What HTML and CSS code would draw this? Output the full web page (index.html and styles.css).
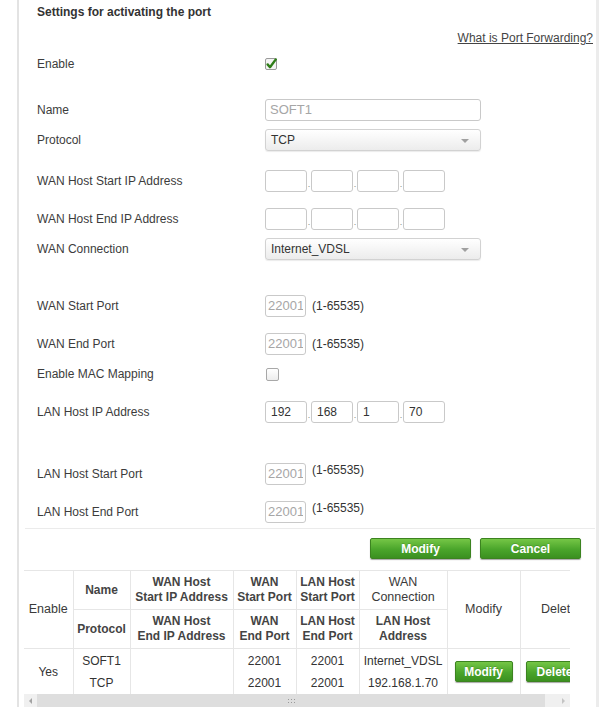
FILE: index.html
```html
<!DOCTYPE html>
<html lang="en">
<head>
<meta charset="utf-8">
<title>Port Forwarding</title>
<link rel="stylesheet" href="styles.css">
</head>
<body>
<div class="panel">
  <div class="title">Settings for activating the port</div>
  <div class="help"><a href="#" class="help-link">What is Port Forwarding?</a></div>

  <div class="row mt7">
    <span class="label">Enable</span>
    <span class="ctl">
      <svg class="cb" width="14" height="14" viewBox="0 0 14 14">
        <rect x="1.5" y="1.5" width="11" height="11" rx="1.5" fill="#f4f4f4" stroke="#9a9a9a"/>
        <path d="M3.6 7.4 L6 10.2 L11.8 2.4" fill="none" stroke="#2f7d18" stroke-width="2.4" stroke-linecap="round" stroke-linejoin="round"/>
      </svg>
    </span>
  </div>

  <div class="row mt24">
    <span class="label">Name</span>
    <span class="ctl"><input class="text wide" type="text" placeholder="SOFT1"></span>
  </div>

  <div class="row mt8">
    <span class="label">Protocol</span>
    <span class="ctl"><span class="select wide">TCP<span class="arrow"></span></span></span>
  </div>

  <div class="row mt19">
    <span class="label">WAN Host Start IP Address</span>
    <span class="ctl ip">
      <input class="text oct" type="text"><span class="dot">.</span><input class="text oct" type="text"><span class="dot">.</span><input class="text oct" type="text"><span class="dot">.</span><input class="text oct" type="text">
    </span>
  </div>

  <div class="row mt16">
    <span class="label">WAN Host End IP Address</span>
    <span class="ctl ip">
      <input class="text oct" type="text"><span class="dot">.</span><input class="text oct" type="text"><span class="dot">.</span><input class="text oct" type="text"><span class="dot">.</span><input class="text oct" type="text">
    </span>
  </div>

  <div class="row mt8">
    <span class="label">WAN Connection</span>
    <span class="ctl"><span class="select wide">Internet_VDSL<span class="arrow"></span></span></span>
  </div>

  <div class="row mt35">
    <span class="label">WAN Start Port</span>
    <span class="ctl port"><input class="text pin" type="text" placeholder="22001"><span class="hint">(1-65535)</span></span>
  </div>

  <div class="row mt16">
    <span class="label">WAN End Port</span>
    <span class="ctl port"><input class="text pin" type="text" placeholder="22001"><span class="hint">(1-65535)</span></span>
  </div>

  <div class="row mt8">
    <span class="label">Enable MAC Mapping</span>
    <span class="ctl"><span class="cb-empty"></span></span>
  </div>

  <div class="row mt16">
    <span class="label">LAN Host IP Address</span>
    <span class="ctl ip">
      <input class="text oct" type="text" value="192"><span class="dot">.</span><input class="text oct" type="text" value="168"><span class="dot">.</span><input class="text oct" type="text" value="1"><span class="dot">.</span><input class="text oct" type="text" value="70">
    </span>
  </div>

  <div class="row mt40">
    <span class="label">LAN Host Start Port</span>
    <span class="ctl port"><input class="text pin" type="text" placeholder="22001"><span class="hint top">(1-65535)</span></span>
  </div>

  <div class="row mt16">
    <span class="label">LAN Host End Port</span>
    <span class="ctl port"><input class="text pin" type="text" placeholder="22001"><span class="hint top">(1-65535)</span></span>
  </div>

  <div class="sep"></div>

  <div class="actions">
    <button class="btn act">Modify</button>
    <button class="btn act">Cancel</button>
  </div>

  <div class="scroller">
    <table class="grid">
      <colgroup>
        <col class="c1"><col class="c2"><col class="c3"><col class="c4"><col class="c5"><col class="c6"><col class="c7"><col class="c8">
      </colgroup>
      <thead>
        <tr class="hr">
          <th rowspan="2" class="lite">Enable</th>
          <th>Name</th>
          <th>WAN Host<br>Start IP Address</th>
          <th>WAN<br>Start Port</th>
          <th>LAN Host<br>Start Port</th>
          <th class="lite">WAN<br>Connection</th>
          <th rowspan="2" class="lite">Modify</th>
          <th rowspan="2" class="lite">Delete</th>
        </tr>
        <tr class="hr">
          <th>Protocol</th>
          <th>WAN Host<br>End IP Address</th>
          <th>WAN<br>End Port</th>
          <th>LAN Host<br>End Port</th>
          <th>LAN Host<br>Address</th>
        </tr>
      </thead>
      <tbody>
        <tr class="br">
          <td>Yes</td>
          <td>SOFT1<br>TCP</td>
          <td></td>
          <td>22001<br>22001</td>
          <td>22001<br>22001</td>
          <td>Internet_VDSL<br>192.168.1.70</td>
          <td><button class="btn small">Modify</button></td>
          <td class="del"><button class="btn small">Delete</button></td>
        </tr>
      </tbody>
    </table>
  </div>
  <div class="hbar">
    <span class="hb-btn"><span class="tri-l"></span></span>
    <span class="hb-thumb"><span class="grip"></span></span>
    <span class="hb-btn"><span class="tri-r"></span></span>
  </div>
</div>
</body>
</html>
```

FILE: styles.css
```css
html, body {
  margin: 0;
  padding: 0;
  overflow: hidden;
  background: #ffffff;
}

body {
  font-family: "Liberation Sans", Arial, sans-serif;
  font-size: 12px;
  color: #333333;
}

.panel {
  margin-left: 17px;
  width: 556px;
  padding: 4px 3px 0 18px;
  border-left: 2px solid #e3e3e3;
  border-right: 3px solid #ececec;
  min-height: 707px;
  box-sizing: content-box;
}

.title {
  font-weight: bold;
  line-height: 16px;
  color: #333;
}

.help {
  margin-top: 10px;
  line-height: 16px;
  text-align: right;
}

.help-link {
  color: #444;
  text-decoration: underline;
}

.row {
  display: flex;
  align-items: center;
  height: 22px;
}

.mt7 { margin-top: 7px; }
.mt8 { margin-top: 8px; }
.mt16 { margin-top: 16px; }
.mt19 { margin-top: 19px; }
.mt24 { margin-top: 24px; }
.mt35 { margin-top: 35px; }
.mt40 { margin-top: 40px; }

.label {
  width: 228px;
  flex: none;
  color: #3c3c3c;
  line-height: 16px;
}

.ctl {
  display: flex;
  align-items: center;
  height: 22px;
}

.cb {
  display: block;
  margin-left: -1px;
}

.cb-empty {
  display: block;
  width: 11px;
  height: 11px;
  margin-left: 1px;
  border: 1px solid #a8a8a8;
  border-radius: 2px;
  background: linear-gradient(#ffffff, #ededed);
}

.text {
  box-sizing: border-box;
  height: 22px;
  margin: 0;
  border: 1px solid #c9c9c9;
  border-radius: 3px;
  padding: 0 4px;
  font-family: "Liberation Sans", Arial, sans-serif;
  font-size: 12px;
  color: #333;
  background: #fff;
  outline: none;
}

.text::placeholder {
  color: #a6a6a6;
  font-size: 13px;
}

.wide {
  width: 216px;
}

.select {
  box-sizing: border-box;
  position: relative;
  display: flex;
  align-items: center;
  height: 22px;
  padding-left: 5px;
  border: 1px solid #d2d2d2;
  border-radius: 3px;
  background: linear-gradient(#ffffff, #ececec);
  color: #333;
  box-shadow: 0 1px 1px rgba(0, 0, 0, 0.08);
}

.arrow {
  position: absolute;
  right: 11px;
  top: 9px;
  width: 0;
  height: 0;
  border-left: 4px solid transparent;
  border-right: 4px solid transparent;
  border-top: 4px solid #a0a0a0;
}

.ip {
  align-items: stretch;
}

.oct {
  width: 42px;
  padding-left: 5px;
}

.dot {
  width: 4px;
  text-align: center;
  font-size: 9px;
  line-height: 28px;
  color: #888;
}

.pin {
  width: 41px;
  padding: 0 2px;
}

.hint {
  margin-left: 6px;
  color: #333;
  line-height: 16px;
}

.hint.top {
  align-self: flex-start;
  line-height: 14px;
}

.sep {
  margin: 5px -2px 0 -12px;
  height: 1px;
  background: #ebebeb;
}

.actions {
  display: flex;
  justify-content: flex-end;
  gap: 9px;
  margin-top: 9px;
  margin-right: 12px;
}

.btn {
  box-sizing: border-box;
  margin: 0;
  height: 21px;
  border: 1px solid #3c8320;
  border-radius: 2px;
  background: linear-gradient(#75c646, #4aa52b 55%, #3b9020);
  color: #ffffff;
  font-family: "Liberation Sans", Arial, sans-serif;
  font-size: 12px;
  font-weight: bold;
  text-shadow: 0 -1px 0 rgba(0, 0, 0, 0.15);
  box-shadow: 0 1px 1px rgba(0, 0, 0, 0.35);
  padding: 0;
}

.act {
  width: 101px;
}

.small {
  width: 58px;
  display: block;
}

.scroller {
  margin-top: 11px;
  margin-left: -13px;
  width: 546px;
  overflow: hidden;
}

.grid {
  table-layout: fixed;
  width: 574px;
  border-collapse: collapse;
  text-align: center;
}

.c1 { width: 49px; }
.c2 { width: 57px; }
.c3 { width: 103px; }
.c4 { width: 63px; }
.c5 { width: 63px; }
.c6 { width: 88px; }
.c7 { width: 73px; }
.c8 { width: 78px; }

.grid th,
.grid td {
  border: 1px solid #e6e6e6;
  padding: 0;
  overflow: hidden;
  white-space: nowrap;
}

.grid tr > :first-child {
  border-left: none;
}

.grid th {
  height: 38px;
  line-height: 15px;
  font-weight: bold;
  color: #444;
}

.grid th.lite {
  font-weight: normal;
  color: #3a3a3a;
  font-size: 12.5px;
}

.grid td {
  height: 45px;
  line-height: 22px;
  color: #333;
  border-bottom: none;
}

.grid td .small {
  margin: 0 auto;
}

.grid td.del {
  text-align: left;
}

.grid td.del .small {
  margin: 0 0 0 5px;
}

.hbar {
  display: flex;
  margin-left: -13px;
  width: 546px;
  height: 17px;
  background: #f0f0f0;
}

.hb-btn {
  flex: none;
  width: 13px;
  display: flex;
  align-items: center;
  justify-content: center;
  height: 13px;
}

.tri-l {
  width: 0;
  height: 0;
  border-top: 3px solid transparent;
  border-bottom: 3px solid transparent;
  border-right: 3px solid #a3a3a3;
}

.tri-r {
  width: 0;
  height: 0;
  border-top: 3px solid transparent;
  border-bottom: 3px solid transparent;
  border-left: 3px solid #c4c4c4;
}

.hb-thumb {
  flex: none;
  width: 508px;
  height: 17px;
  background: #dedede;
  display: flex;
  justify-content: center;
  padding-top: 4px;
  box-sizing: border-box;
}

.hb-thumb + .hb-btn {
  margin-left: auto;
}

.grip {
  width: 9px;
  height: 6px;
  background: radial-gradient(circle, #9a9a9a 0.7px, transparent 1px) 0 0 / 3px 3px;
}
```
